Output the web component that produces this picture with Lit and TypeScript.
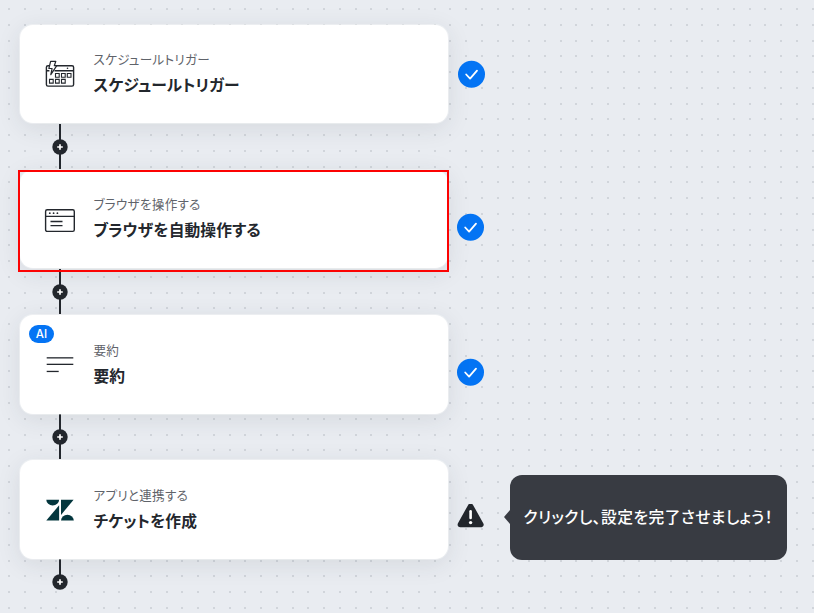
import { LitElement, html, css, svg, nothing } from "lit";
import { customElement, property } from "lit/decorators.js";

type IconName = "calendar" | "browser" | "lines" | "zendesk";

interface Step {
  icon: IconName;
  label: string;
  title: string;
  badge?: string;
  selected?: boolean;
  hint?: string;
}

const STEPS: Step[] = [
  { icon: "calendar", label: "スケジュールトリガー", title: "スケジュールトリガー" },
  { icon: "browser", label: "ブラウザを操作する", title: "ブラウザを自動操作する", selected: true },
  { icon: "lines", label: "要約", title: "要約", badge: "AI" },
  { icon: "zendesk", label: "アプリと連携する", title: "チケットを作成", hint: "クリックし、設定を完了させましょう！" },
];

const ICONS = {
  calendar: svg`
    <g fill="none" stroke="#23272d" stroke-width="1.4">
      <path d="M9.5 7.7H28a1.6 1.6 0 0 1 1.6 1.6V26.5a1.6 1.6 0 0 1-1.6 1.6H4A1.6 1.6 0 0 1 2.4 26.5V9.3A1.6 1.6 0 0 1 4 7.7h1M2.4 12.8h3M10.5 12.8h19"/>
      <path d="M6.6 3.3h5.2l-1.5 4.4h2.5l-6 9 1.3-6.2H4.9z" fill="#fff" stroke-linejoin="round" stroke-width="1.2"/>
      <path stroke-width="1.1" d="M11.5 15.5h3.7v3.7h-3.7zM17.5 15.5h3.7v3.7h-3.7zM23.3 15.5h3.7v3.7h-3.7zM5.5 21.4h3.7v3.7h-3.7zM11.5 21.4h3.7v3.7h-3.7zM17.5 21.4h3.7v3.7h-3.7z"/>
    </g>
    <circle cx="23.5" cy="10.2" r=".8" fill="#23272d"/>`,
  browser: svg`
    <g fill="none" stroke="#23272d" stroke-width="1.4">
      <rect x="1.6" y="6.8" width="28.7" height="21.6" rx="1.6"/>
      <path d="M1.6 13.4h28.7M6.5 18.5h12M6.5 22.7h12" stroke-width="1.3"/>
    </g>
    <g fill="#23272d"><circle cx="5.8" cy="10.2" r=".9"/><circle cx="9.6" cy="10.2" r=".9"/><circle cx="13.4" cy="10.2" r=".9"/></g>`,
  lines: svg`
    <g fill="#23272d">
      <rect x="2.7" y="9.2" width="26.6" height="1.3"/>
      <rect x="2.7" y="15.7" width="26.6" height="1.3"/>
      <rect x="2.7" y="22.8" width="12" height="1.3"/>
    </g>`,
  zendesk: svg`
    <g fill="#03363d">
      <path d="M2.3 5.7h12.8a6.4 5.8 0 0 1-12.8 0z"/>
      <path d="M15.1 11.3V26.6H2.3z"/>
      <path d="M17 5.7h12.6L17 20.9z"/>
      <path d="M17 26.6a6.4 5.9 0 0 1 12.8 0z"/>
    </g>`,
};

@customElement("flow-connector")
export class FlowConnector extends LitElement {
  @property({ type: Boolean, reflect: true }) last = false;

  static styles = css`
    :host { display: block; height: 46.2px; margin-left: 32px; width: 16px; }
    svg { display: block; overflow: visible; }
  `;

  render() {
    return html`<svg width="16" height="46" viewBox="0 0 16 46">
      <rect x="7" y="0" width="2" height=${this.last ? 22 : 45} fill="#23272d" shape-rendering="crispEdges" />
      <circle cx="8" cy="23" r="7.7" fill="#23272d" />
      <path d="M8 20.2v5.6M5.2 23h5.6" stroke="#fff" stroke-width="1.7" />
    </svg>`;
  }
}

@customElement("flow-step")
export class FlowStep extends LitElement {
  @property({ attribute: false }) step!: Step;

  static styles = css`
    :host { display: block; }
    .row { display: flex; align-items: center; height: 99px; }
    .card {
      position: relative;
      box-sizing: border-box;
      flex: none;
      width: 428px;
      height: 98.3px;
      border-radius: 13px;
      background: #fff;
      box-shadow: 0 0 0 1px rgba(255, 255, 255, 0.35), 0 5px 24px rgba(35, 50, 55, 0.1);
      display: flex;
      align-items: center;
      padding-left: 24px;
      gap: 17.5px;
    }
    .frame { position: absolute; inset: 0px -1px -3.5px -2px; border: 2px solid #fc0303; }
    .badge {
      position: absolute;
      left: 9px;
      top: 9.3px;
      width: 25px;
      height: 18px;
      border-radius: 9px;
      background: #0474f4;
      color: #fff;
      font: 500 11.5px/18px Inter, sans-serif;
      text-align: center;
    }
    .icon { flex: none; width: 32px; height: 32px; }
    .text {
      display: flex;
      flex-direction: column;
      gap: 5px;
      margin-top: -0.6px;
      white-space: nowrap;
      font-feature-settings: "palt";
    }
    .label { font-size: 12.6px; line-height: 18px; letter-spacing: 0.26px; color: #5f636a; }
    .title { font-size: 15.75px; line-height: 24px; letter-spacing: 0.1px; font-weight: 700; color: #23272d; }
    .status { flex: none; margin-left: 9px; width: 28px; height: 28px; }
    .status.lower { margin-top: 16px; margin-left: 8px; }
    .hint {
      position: relative;
      flex: none;
      box-sizing: border-box;
      margin: 16px 0 0 26px;
      width: 277px;
      height: 85px;
      border-radius: 12px;
      background: #383b42;
      color: #fff;
      font-size: 15.75px;
      font-weight: 500;
      line-height: 84px;
      padding-left: 13.5px;
      white-space: nowrap;
      font-feature-settings: "palt";
      letter-spacing: 0.46px;
    }
    .arrow { position: absolute; left: -6px; top: 35px; width: 6px; height: 14px; background: inherit; clip-path: polygon(0 50%, 100% 0, 100% 100%); }
  `;

  private renderStatus() {
    if (this.step.hint) {
      return html`<svg class="status lower" viewBox="0 0 28 28">
        <g transform="translate(0 -2)">
          <path d="M14.6 4.3 24.8 22.5H4.4z" fill="#23272d" stroke="#23272d" stroke-width="5.6" stroke-linejoin="round" />
          <path d="M14.6 9.2v6.8" stroke="#fff" stroke-width="2.6" stroke-linecap="round" />
          <circle cx="14.6" cy="20.6" r="1.7" fill="#fff" />
        </g>
      </svg>`;
    }
    const first = this.step.icon === "calendar";
    return html`<svg class="status ${first ? "" : "lower"}" viewBox="0 0 28 28">
      <circle cx="14.5" cy="14.3" r="13.5" fill="#0474f4" />
      <path d="m9.2 14.5 3.9 4.1 6.9-8" fill="none" stroke="#fff" stroke-width="1.8" stroke-linecap="round" stroke-linejoin="round" />
    </svg>`;
  }

  render() {
    const s = this.step;
    return html`<div class="row">
      <div class="card">
        <svg class="icon" viewBox="0 0 32 32">${ICONS[s.icon]}</svg>
        <div class="text">
          <div class="label">${s.label}</div>
          <div class="title">${s.title}</div>
        </div>
        ${s.badge ? html`<div class="badge">${s.badge}</div>` : nothing}
        ${s.selected ? html`<div class="frame"></div>` : nothing}
      </div>
      ${this.renderStatus()}
      ${s.hint ? html`<div class="hint"><span class="arrow"></span>${s.hint}</div>` : nothing}
    </div>`;
  }
}

const PITCH = 15.76;
const dotPath = Array.from({ length: 39 }, (_, r) =>
  Array.from({ length: 52 }, (_, c) => `M${Math.round(8 + c * PITCH)} ${Math.round(8 + r * PITCH)}h2v2h-2z`).join("")
).join("");

@customElement("app-root")
export class AppRoot extends LitElement {
  static styles = css`
    :host {
      display: block;
      position: relative;
      width: 814px;
      height: 613px;
      overflow: hidden;
      background: #e9ecf1;
      font-family: "Noto Sans CJK JP", sans-serif;
    }
    .dots { position: absolute; inset: 0; }
    .flow { position: relative; display: flex; flex-direction: column; padding: 24.5px 0 0 20px; }
  `;

  render() {
    return html`
      <svg class="dots" width="814" height="613"><path d=${dotPath} fill="#d1d5db" /></svg>
      <div class="flow">
        ${STEPS.map((step, i) => html`
          <flow-step .step=${step}></flow-step>
          <flow-connector ?last=${i === STEPS.length - 1}></flow-connector>`)}
      </div>`;
  }
}
